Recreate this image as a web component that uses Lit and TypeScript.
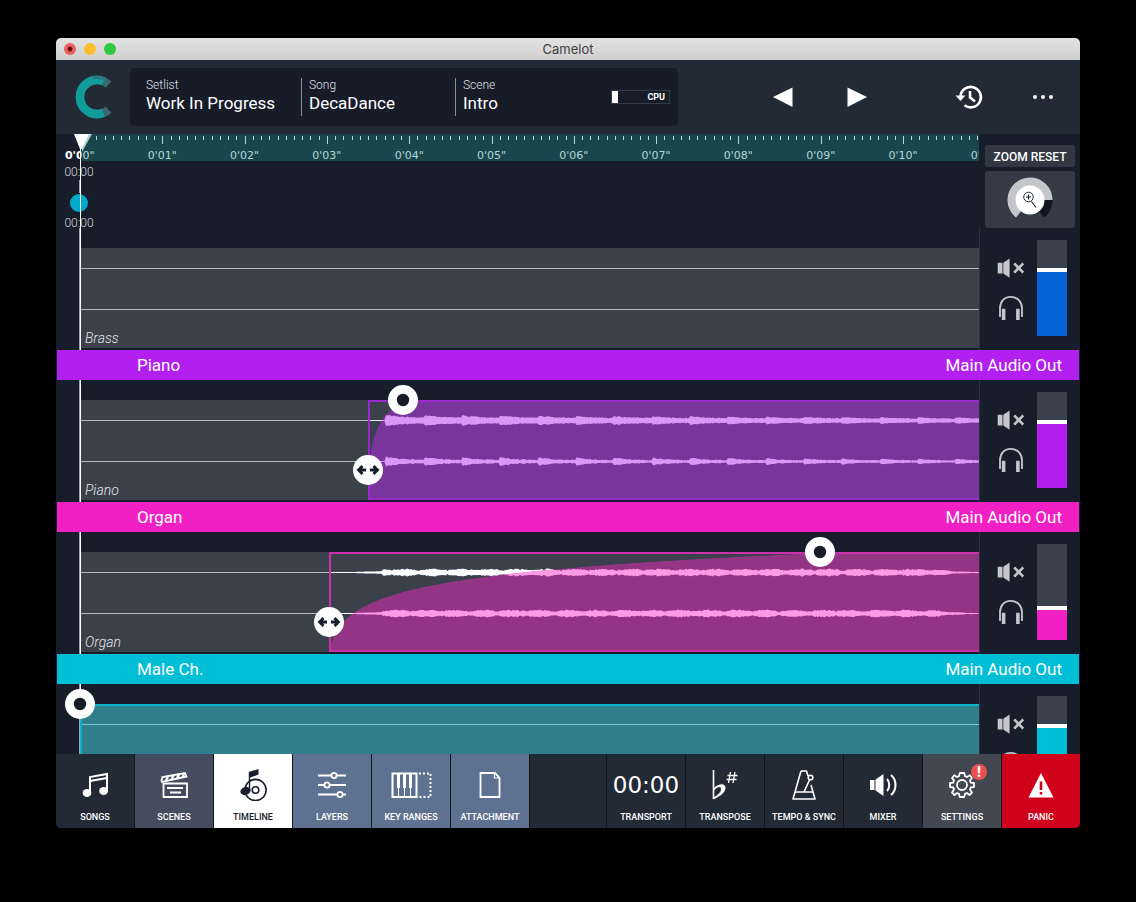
import { LitElement, html, svg, css, nothing } from "lit";
import { customElement, property, state } from "lit/decorators.js";
import { classMap } from "lit/directives/class-map.js";
import { styleMap } from "lit/directives/style-map.js";

const ORIGIN = 24; // left edge of time zero inside a lane
const SECOND = 82.3; // horizontal scale of the timeline
const CLIP_TOP = 20;
const CLIP_HEIGHT = 100;

interface Clip {
  start: number;
  fade: number;
  fill: string;
  edge: string;
  wave: string;
  shape: "piano" | "organ" | "flat";
}

interface Track {
  name: string;
  out?: string;
  color: string;
  level: number;
  clip?: Clip;
}

const TRACKS: Track[] = [
  { name: "Brass", color: "#0463d5", level: 64 },
  {
    name: "Piano",
    out: "Main Audio Out",
    color: "#b31fee",
    level: 64,
    clip: { start: 288, fade: 35, fill: "#79359c", edge: "#9a28cc", wave: "#da97f8", shape: "piano" },
  },
  {
    name: "Organ",
    out: "Main Audio Out",
    color: "#f020c4",
    level: 30,
    clip: { start: 249, fade: 491, fill: "#943485", edge: "#cc30ab", wave: "#fb9be6", shape: "organ" },
  },
  {
    name: "Male Ch.",
    out: "Main Audio Out",
    color: "#00bed6",
    level: 64,
    clip: { start: 0, fade: 0, fill: "#317e8c", edge: "#08b4c9", wave: "#7cc3cd", shape: "flat" },
  },
];

const noise = (i: number, seed: number) => {
  const v = Math.sin(i * 12.9898 + seed * 78.233) * 43758.5453;
  return v - Math.floor(v);
};

// Half height of the waveform at a distance x from time zero.
function amplitude(shape: Clip["shape"], channel: number, x: number): number {
  if (shape === "flat") return 0.5;
  const n = noise(x, channel + 1);
  if (shape === "piano") {
    if (x < 306) return 0.5;
    const phase = ((x - 306) % 38) / 38;
    const decay = Math.max(0.55, 1 - (x - 306) / 1400);
    const burst = Math.exp(-phase * 2.6);
    const base = channel === 0 ? 2.4 : 0.9;
    const peak = channel === 0 ? 2.4 : 3.2;
    return (base + burst * peak + n * 1.1) * decay;
  }
  if (x < 270) return 0.5;
  if (x < 303) return 0.5 + ((x - 270) / 33) * 0.8;
  const tail = x < 850 ? 1 : Math.max(0.2, 1 - (x - 850) / 45);
  return (1.4 + Math.abs(Math.sin((x + channel * 7) / 9)) * 1.3 + n * 1.3) * tail;
}

function wavePath(shape: Clip["shape"], channel: number, from: number, mid: number): string {
  const top: string[] = [];
  const bottom: string[] = [];
  for (let x = from; x <= 2400; x += 1.5) {
    const a = amplitude(shape, channel, x);
    top.push(`${x},${(mid - a).toFixed(1)}`);
    bottom.unshift(`${x},${(mid + a).toFixed(1)}`);
  }
  return `M${top.join("L")}L${bottom.join("L")}Z`;
}

// Logarithmic fade-in area, closed along the bottom of the clip.
function fadePath(start: number, fade: number): string {
  const pts: string[] = [];
  const steps = 80;
  for (let i = 0; i <= steps; i++) {
    const t = (i / steps) ** 2;
    const h = fade ? Math.log(1 + 100 * t) / Math.log(101) : 1;
    pts.push(`${start + t * fade},${(CLIP_HEIGHT - 1 - h * (CLIP_HEIGHT - 2)).toFixed(2)}`);
  }
  return `M${start},${CLIP_HEIGHT - 1}L${pts.join("L")}L4000,1L4000,${CLIP_HEIGHT - 1}Z`;
}

@customElement("track-lane")
export class TrackLane extends LitElement {
  @property({ attribute: false }) track!: Track;

  static styles = css`
    :host {
      display: block;
      position: relative;
      overflow: hidden;
      height: 122px;
    }
    svg {
      display: block;
      width: 100%;
      height: 100%;
    }
    .handle svg {
      width: 30px;
      height: 30px;
    }
    .name {
      position: absolute;
      left: 29px;
      bottom: 3px;
      font: italic 300 14px/18px Roboto, sans-serif;
      color: #e4e6ea;
    }
    .handle {
      position: absolute;
      width: 30px;
      height: 30px;
      margin: -15px 0 0 -15px;
      padding: 0;
      border: 0;
      border-radius: 50%;
      background: #fff;
    }
  `;

  render() {
    const { name, clip } = this.track;
    const id = `fade-${name.toLowerCase().replace(/\W/g, "")}`;
    return html`
      <svg aria-hidden="true">
        <rect x="23" y="0" width="1" height="122" fill="#9fa3ab"></rect>
        <rect x="24" y="0" width="1" height="122" fill="#fff"></rect>
        <g transform="translate(${ORIGIN} ${CLIP_TOP})">
          <rect x="1" width="4000" height=${CLIP_HEIGHT} fill="#3a414b"></rect>
          <rect x="1" y="20" width="4000" height="1" fill="#b4b8be"></rect>
          <rect x="1" y="61" width="4000" height="1" fill="#b4b8be"></rect>
          ${clip ? this.clipShape(clip, id) : nothing}
        </g>
      </svg>
      ${clip && clip.shape === "flat" ? nothing : html`<span class="name">${name}</span>`}
      ${clip ? this.handles(clip) : nothing}
    `;
  }

  private clipShape(clip: Clip, id: string) {
    const fade = fadePath(clip.start, clip.fade);
    const waves = wavePath(clip.shape, 0, clip.start, 20.5) + wavePath(clip.shape, 1, clip.start, 61.5);
    return svg`
      <clipPath id=${id}><path d=${fade}></path></clipPath>
      <path d=${waves} fill="#fff" opacity=${clip.shape === "organ" ? 1 : 0.7}></path>
      <g clip-path="url(#${id})">
        <path d=${fade} fill=${clip.fill}></path>
        <path d=${waves} fill=${clip.wave}></path>
      </g>
      <rect x=${clip.start + 1} y="1" width="4000" height=${CLIP_HEIGHT - 2}
        fill="none" stroke=${clip.edge} stroke-width="2"></rect>
    `;
  }

  private handles(clip: Clip) {
    const x = ORIGIN + clip.start;
    return html`
      <button class="handle" aria-label="Fade in"
        style=${styleMap({ left: `${x + clip.fade}px`, top: `${CLIP_TOP}px` })}>
        <svg viewBox="0 0 30 30"><circle cx="15" cy="15" r="6.2" fill="#171c29"></circle></svg>
      </button>
      ${clip.start
        ? html`<button class="handle" aria-label="Clip start"
            style=${styleMap({ left: `${x}px`, top: `${CLIP_TOP + 70}px` })}>
            <svg viewBox="0 0 30 30" fill="none" stroke="#171c29" stroke-width="2.8">
              <path d="M13 15H5.5M9.500 11L5.500 15L9.500 19M17 15H24.500M20.500 11L24.500 15L20.500 19"></path>
            </svg>
          </button>`
        : nothing}
    `;
  }
}

@customElement("time-ruler")
export class TimeRuler extends LitElement {
  @state() private span = 0;

  private observer = new ResizeObserver(([entry]) => {
    this.span = entry.contentRect.width;
  });

  connectedCallback() {
    super.connectedCallback();
    this.observer.observe(this);
  }

  disconnectedCallback() {
    super.disconnectedCallback();
    this.observer.disconnect();
  }

  static styles = css`
    :host {
      display: block;
      min-width: 0;
      overflow: hidden;
    }
    svg {
      display: block;
      width: 100%;
      height: 94px;
    }
    .tick {
      font: 11px "DejaVu Sans", sans-serif;
      fill: #b4d8d9;
      text-anchor: middle;
    }
    .first {
      fill: #fff;
      font-weight: 700;
    }
    .clock {
      font: 300 12px Roboto, sans-serif;
      fill: #d6d9df;
      text-anchor: middle;
    }
  `;

  render() {
    const length = Math.max(0, (this.span - ORIGIN) / SECOND);
    const ticks = Array.from({ length: Math.ceil(length * 10) }, (_, i) => i).slice(2);
    const seconds = Array.from({ length: Math.floor(length + 0.15) + 1 }, (_, i) => i);
    const label = (s: number) => `0'${String(s).padStart(2, "0")}"`;
    return html`
      <svg>
        <path d="M24 0H4000V27H26L24 14Z" fill="#19464c"></path>
        ${ticks.map(
          (i) => svg`<rect x=${Math.round(ORIGIN + (i * SECOND) / 10)} y="2" width="1"
            height=${i % 10 ? 4 : 8} fill="#b4d8d9"></rect>`,
        )}
        ${seconds.map((s) => svg`<text class="tick" x=${ORIGIN + s * SECOND} y="25">${label(s)}</text>`)}
        <clipPath id="before"><rect width="24" height="30"></rect></clipPath>
        <rect width="24" height="27" fill="#171d2a"></rect>
        <text class="tick first" x="25" y="25" clip-path="url(#before)">0'00"</text>
        <path d="M30 0H36L26 18V13Z" fill="#a9d0d1"></path>
        <text class="clock" x="23" y="42">00:00</text>
        <rect x="23" y="46" width="1" height="13" fill="#9fa3ab"></rect>
        <circle cx="23" cy="69" r="9" fill="#00aac8"></circle>
        <text class="clock" x="23" y="93">00:00</text>
        <path d="M18 0H33L26 15H24Z" fill="#fff"></path>
        <rect x="24" y="10" width="1" height="84" fill="#fff"></rect>
      </svg>
    `;
  }
}

@customElement("channel-strip")
export class ChannelStrip extends LitElement {
  @property({ attribute: false }) track!: Track;

  static styles = css`
    :host {
      display: flex;
      justify-content: space-between;
      box-sizing: border-box;
      padding: 12px 13px 0 15px;
      border-left: 1px solid #2b313d;
    }
    .toggles {
      display: flex;
      flex-direction: column;
      gap: 12px;
      padding-top: 14px;
    }
    button {
      display: block;
      padding: 0;
      border: 0;
      background: none;
    }
    svg {
      display: block;
    }
    .fader {
      appearance: none;
      -webkit-appearance: none;
      writing-mode: vertical-lr;
      direction: rtl;
      width: 30px;
      height: 96px;
      margin: 0;
      background: linear-gradient(to top, var(--tone) calc(var(--level) * 1px + 2px), #3a404c 0);
    }
    .fader::-webkit-slider-thumb {
      -webkit-appearance: none;
      width: 30px;
      height: 4px;
      background: #fff;
      border: 0;
      border-radius: 0;
    }
  `;

  render() {
    const { name, level, color } = this.track;
    return html`
      <div class="toggles">
        <button aria-label="Mute ${name}">
          <svg width="32" height="28" viewBox="0 0 32 28">
            <path d="M2.700 8.700h4.800v10.800H2.700zM8.300 8.700L14.600 4.400v19.400L8.300 19.500z" fill="#c5c7cc"></path>
            <path d="M19.200 9.300L28.200 18.700M28.200 9.300L19.200 18.700" stroke="#c5c7cc" stroke-width="2.600"></path>
          </svg>
        </button>
        <button aria-label="Solo ${name}">
          <svg width="32" height="28" viewBox="0 0 32 28" fill="none" stroke="#c5c7cc">
            <path d="M5 23V14.500C5 8 9 2.800 15.700 2.800S27 8 27 14.500V23" stroke-width="1.800"></path>
            <path d="M8.600 14.800V26M22.900 14.800V26" stroke-width="3.600"></path>
          </svg>
        </button>
      </div>
      <input class="fader" type="range" min="0" max="92" .value=${String(level)}
        aria-label="${name} level" style=${styleMap({ "--level": String(level), "--tone": color })} />
    `;
  }
}

const ICONS: Record<string, unknown> = {
  songs: svg`
    <path d="M-5 8V-8L12 -11V6M-5 -4L12 -7" fill="none" stroke="currentColor" stroke-width="2"></path>
    <ellipse cx="-8" cy="8" rx="4.400" ry="4"></ellipse><ellipse cx="8.600" cy="6" rx="4.400" ry="4"></ellipse>`,
  scenes: svg`
    <path d="M-10.500 -1.500H13V12H-10.500ZM-7 3H9M-4 7.500H7" fill="none" stroke="currentColor" stroke-width="1.800"></path>
    <path d="M-12.500 -4.500L-11.500 -8L11 -12L12.500 -8.500L-12 -3Z" fill="none" stroke="currentColor" stroke-width="1.800"></path>
    <path d="M-8 -4L-6 -9M-2.500 -5L-.500 -10M3 -6L5 -11M8.500 -7L10 -12" stroke="currentColor" stroke-width="2.400"></path>`,
  timeline: svg`
    <circle cx="2.500" cy="5" r="10.600" fill="none" stroke="currentColor" stroke-width="1.600"></circle>
    <circle cx="2.500" cy="5" r="3.300" fill="none" stroke="currentColor" stroke-width="1.600"></circle>
    <ellipse cx="-7.500" cy="6" rx="5.200" ry="4" transform="rotate(-18 -7.500 6)"></ellipse>
    <path d="M-4.200 6V-13L5.500 -16V-10.500L-2.800 -7.500V6Z"></path>`,
  layers: svg`
    <path d="M-14 -9.500H-1M5 -9.500H14M-14 0H-8M-2 0H14M-14 9.500H5M11 9.500H14" stroke="currentColor" stroke-width="2"></path>
    <g fill="none" stroke="currentColor" stroke-width="1.800"><circle cx="2" cy="-9.500" r="2.600"></circle>
    <circle cx="-5" cy="0" r="2.600"></circle><circle cx="8" cy="9.500" r="2.600"></circle></g>`,
  keys: svg`
    <path d="M-18.500 -11.500H5.500V12H-18.500Z" fill="none" stroke="currentColor" stroke-width="2"></path>
    <path d="M-12.500 -11V3M-6.500 -11V3M-.500 -11V3" stroke="currentColor" stroke-width="3"></path>
    <path d="M-12.500 3V12M-6.500 3V12M-.500 3V12" stroke="currentColor" stroke-width="1"></path>
    <path d="M8 -11.500H19.500V12H6" fill="none" stroke="currentColor" stroke-width="2" stroke-dasharray="2 2"></path>`,
  file: svg`
    <path d="M-9.500 -12H5L9.500 -7V12H-9.500Z" fill="none" stroke="currentColor" stroke-width="1.800"></path>
    <path d="M4.500 -12V-7H9.500" fill="none" stroke="currentColor" stroke-width="1.200"></path>`,
  accidentals: svg`
    <path d="M-11.500 -15V14" stroke="currentColor" stroke-width="1.600"></path>
    <path d="M-12 14.500C-4 11 .500 7 .500 3C.500 -2 -6 -2 -11 3V5.500C-7.500 1.200 -4 .800 -4 4.200C-4 7.500 -8 10.500 -11 12Z"></path>
    <path d="M5.500 -13L3.500 -2M10 -13L8 -2M2.500 -9.500H12.500M1.500 -5.500H11.500" stroke="currentColor" stroke-width="1.300"></path>`,
  metronome: svg`
    <g fill="none" stroke="currentColor" stroke-width="1.600" stroke-linejoin="round">
    <path d="M-3 -14H2.500L4 -9M7 0L11 14H-11L-3 -14M-9 7H9M0 7L5.500 -5"></path>
    <circle cx="6.500" cy="-7.500" r="2.300"></circle></g>`,
  mixer: svg`
    <path d="M-13 -5H-8.500V5H-13ZM-7.500 -5.500L.500 -11V11L-7.500 5.500Z"></path>
    <path d="M4 -6C7 -3 7 3 4 6M8 -10C14 -5 14 5 8 10" fill="none" stroke="currentColor" stroke-width="2"></path>`,
  gear: svg`
    <g fill="none" stroke="currentColor" stroke-width="1.800" stroke-linejoin="round">
    <path d="M-2.200 -12H2.200L3 -8.800L5 -8L7.800 -9.700L10 -7L8 -4.600L8.800 -2.400L12 -2V2L8.800 2.400L8 4.600L10 7.500L7.500 10L5 8L3 8.800L2.200 12H-2.200L-3 8.800L-5 8L-7.500 10L-10 7.500L-8 4.600L-8.800 2.400L-12 2V-2L-8.800 -2.400L-8 -4.600L-10 -7L-7.800 -9.700L-5 -8L-3 -8.800Z"></path>
    <circle r="5"></circle></g>`,
  warning: svg`
    <path d="M0 -12L12.500 12.500H-12.500Z"></path>
    <path d="M0 -3.500V5M0 7V9.500" stroke="#d0021b" stroke-width="2.600"></path>`,
};

interface Tab {
  label: string;
  icon?: string;
  tone: string;
  badge?: boolean;
}

const TABS: (Tab | null)[] = [
  { label: "SONGS", icon: "songs", tone: "base" },
  { label: "SCENES", icon: "scenes", tone: "slate" },
  { label: "TIMELINE", icon: "timeline", tone: "active" },
  { label: "LAYERS", icon: "layers", tone: "blue" },
  { label: "KEY RANGES", icon: "keys", tone: "blue" },
  { label: "ATTACHMENT", icon: "file", tone: "blue" },
  null,
  { label: "TRANSPORT", tone: "base" },
  { label: "TRANSPOSE", icon: "accidentals", tone: "base" },
  { label: "TEMPO & SYNC", icon: "metronome", tone: "base" },
  { label: "MIXER", icon: "mixer", tone: "base" },
  { label: "SETTINGS", icon: "gear", tone: "grey", badge: true },
  { label: "PANIC", icon: "warning", tone: "red" },
];

@customElement("app-root")
export class AppRoot extends LitElement {
  static styles = css`
    :host {
      display: flex;
      box-sizing: border-box;
      height: 100vh;
      padding: 38px 56px 74px;
      background: #000;
      color: #fff;
      font-family: Roboto, sans-serif;
    }
    button {
      padding: 0;
      border: 0;
      background: none;
      color: inherit;
      font: inherit;
    }
    svg {
      display: block;
    }
    .window {
      display: flex;
      flex: 1;
      flex-direction: column;
      min-width: 0;
      overflow: hidden;
      border-radius: 5px;
      background: #171d2a;
    }
    .titlebar {
      display: grid;
      grid-template-columns: 1fr auto 1fr;
      align-items: center;
      flex: none;
      height: 22px;
      padding: 0 8px;
      background: linear-gradient(#e2e2e2, #cfcfcf);
      color: #3f3f42;
      font-family: Inter, sans-serif;
      font-size: 13px;
    }
    .lights {
      display: flex;
      gap: 8px;
    }
    .light {
      display: grid;
      place-items: center;
      width: 12px;
      height: 12px;
      border-radius: 50%;
    }
    .close {
      background: radial-gradient(circle, #6a0c0c 2px, #ed6161 3px);
    }
    .minimise {
      background: #fdbd2f;
    }
    .maximise {
      background: #2bc840;
    }
    .header {
      display: flex;
      align-items: center;
      flex: none;
      height: 74px;
      background: #222a36;
    }
    .logo {
      flex: none;
      width: 74px;
    }
    .info {
      display: flex;
      align-items: center;
      flex: 0 1 548px;
      box-sizing: border-box;
      height: 58px;
      padding: 0 8px;
      border-radius: 4px;
      background: #171c29;
    }
    .field {
      box-sizing: border-box;
      width: 154px;
      height: 38px;
      padding: 0 0 2px 7px;
      border-left: 1px solid #8b8f98;
      text-align: left;
    }
    .field:first-child {
      width: 163px;
      padding-left: 8px;
      border-left: 0;
    }
    .caption {
      display: block;
      font-size: 12px;
      font-weight: 300;
      line-height: 14px;
      color: #dfe1e6;
    }
    .value {
      display: block;
      font-size: 17px;
      line-height: 22px;
      white-space: nowrap;
    }
    .cpu {
      display: flex;
      justify-content: space-between;
      box-sizing: border-box;
      width: 59px;
      height: 14px;
      margin-left: auto;
      padding-right: 4px;
      border: 1px solid #343a46;
      font-size: 9px;
      font-weight: 700;
      line-height: 12px;
    }
    .load {
      width: 6px;
      background: #fff;
    }
    .group {
      display: flex;
      gap: 40px;
      padding-left: 88px;
    }
    .group.end {
      margin-left: auto;
      padding: 0 20px 0 0;
    }
    .stage {
      flex: 1;
      min-height: 0;
      overflow: hidden;
    }
    .row {
      display: grid;
      grid-template-columns: minmax(0, 1fr) 101px;
    }
    .zoom {
      display: flex;
      flex-direction: column;
      gap: 4px;
      padding: 11px 5px 0 6px;
    }
    .reset {
      height: 22px;
      border-radius: 3px;
      background: #313743;
      font-size: 12px;
      font-weight: 500;
      line-height: 24px;
    }
    .dial {
      display: grid;
      place-items: center;
      height: 57px;
      border-radius: 3px;
      background: #353a46;
    }
    .dial > * {
      grid-area: 1 / 1;
    }
    .dial input {
      width: 46px;
      height: 46px;
      margin: 0;
      opacity: 0;
    }
    .bar {
      display: flex;
      justify-content: space-between;
      margin: 0 1px;
      padding: 0 17px 0 80px;
      font-size: 17px;
      line-height: 30px;
    }
    .tabs {
      display: grid;
      grid-template-columns: repeat(6, minmax(0, 78fr)) minmax(0, 76fr) repeat(6, minmax(0, 78fr));
      gap: 1px;
      flex: none;
      height: 74px;
      background: #10151e;
    }
    .tab {
      position: relative;
      display: flex;
      flex-direction: column;
      align-items: center;
      padding-top: 15px;
      background: #222a36;
      overflow: hidden;
    }
    .tab.slate {
      background: #454c5f;
    }
    .tab.active {
      background: #fff;
      color: #171c29;
    }
    .tab.blue {
      background: #5f7190;
    }
    .tab.grey {
      background: #434751;
    }
    .tab.red {
      background: #d0021b;
    }
    .tab > svg {
      fill: currentColor;
    }
    .glyph {
      height: 32px;
      font: 23px/32px "DejaVu Sans", sans-serif;
    }
    .label {
      padding-top: 9px;
      font-size: 9px;
      font-weight: 500;
      line-height: 14px;
      white-space: nowrap;
    }
    .badge {
      position: absolute;
      top: 10px;
      right: 14px;
      width: 16px;
      height: 16px;
      border-radius: 50%;
      background: #e9504f;
      font-size: 14px;
      font-weight: 900;
      line-height: 16px;
      text-align: center;
    }
  `;

  private field(caption: string, value: string) {
    return html`<button class="field">
      <span class="caption">${caption}</span><span class="value">${value}</span>
    </button>`;
  }

  private tab(tab: Tab | null) {
    if (!tab) return html`<div class="tab"></div>`;
    return html`
      <button class=${classMap({ tab: true, [tab.tone]: true })}>
        ${tab.icon
          ? html`<svg width="44" height="32" viewBox="-22 -16 44 32">${ICONS[tab.icon]}</svg>`
          : html`<span class="glyph">00:00</span>`}
        <span class="label">${tab.label}</span>
        ${tab.badge ? html`<span class="badge">!</span>` : nothing}
      </button>
    `;
  }

  render() {
    return html`
      <main class="window">
        <div class="titlebar">
          <div class="lights">
            <button class="light close" aria-label="Close"></button>
            <button class="light minimise" aria-label="Minimise"></button>
            <button class="light maximise" aria-label="Maximise"></button>
          </div>
          <span>Camelot</span>
        </div>

        <header class="header">
          <svg class="logo" width="74" height="44" viewBox="-1 0 74 44" fill="none" stroke-width="8.500">
            <path d="M51.500 9.500A17 17 0 1 0 51.500 34.500" stroke="#3c676e"></path>
            <path d="M46.500 6.300A17 17 0 1 0 46.500 37.700" stroke="#109c9b"></path>
            <path d="M36 3A19.500 19.500 0 0 1 48 4.200" stroke="#2a7b80" stroke-width="3"></path>
          </svg>
          <section class="info">
            ${this.field("Setlist", "Work In Progress")} ${this.field("Song", "DecaDance")}
            ${this.field("Scene", "Intro")}
            <div class="cpu" role="meter" aria-label="CPU" aria-valuenow="10"><span class="load"></span>CPU</div>
          </section>
          <nav class="group">
            <button aria-label="Previous">
              <svg width="34" height="34"><path d="M7 17L26.500 7.500V27Z" fill="#fff"></path></svg>
            </button>
            <button aria-label="Next">
              <svg width="34" height="34"><path d="M27 17L7.500 7.500V27Z" fill="#fff"></path></svg>
            </button>
          </nav>
          <div class="group end">
            <button aria-label="History">
              <svg width="34" height="34" fill="none" stroke="#fff" stroke-width="2.600">
                <path d="M8.500 17A10.200 10.200 0 1 1 12.500 25.200"></path>
                <path d="M3.500 15.500H13.500L8.500 21Z" fill="#fff" stroke="none"></path>
                <path d="M18 11V17.500L23 21.500"></path>
              </svg>
            </button>
            <button aria-label="More">
              <svg width="34" height="34" fill="#fff">
                <circle cx="9" cy="17" r="2"></circle><circle cx="17" cy="17" r="2"></circle>
                <circle cx="25" cy="17" r="2"></circle>
              </svg>
            </button>
          </div>
        </header>

        <section class="stage">
          <div class="row">
            <time-ruler></time-ruler>
            <div class="zoom">
              <button class="reset">ZOOM RESET</button>
              <label class="dial">
                <svg width="46" height="46" viewBox="-23 -23 46 46">
                  <path d="M22.500 0A22.500 22.500 0 0 1 14 17.600L0 0Z" fill="#10151f"></path>
                  <path d="M-14 17.600A22.500 22.500 0 1 1 22.500 0L0 0Z" fill="#c4c6ca"></path>
                  <circle r="14.500" fill="#fff"></circle>
                  <g fill="none" stroke="#222a36" stroke-width="1">
                    <circle cx="-1.500" cy="-3" r="4.800"></circle>
                    <path d="M-4 -3H1M-1.500 -5.500V-.500M1.500 1.500L6 7.500" stroke-width="1.200"></path>
                  </g>
                </svg>
                <input type="range" min="0" max="100" value="80" aria-label="Zoom" />
              </label>
            </div>
          </div>
          ${TRACKS.map(
            (track) => html`
              ${track.out
                ? html`<div class="bar" style=${styleMap({ background: track.color })}>
                    <span>${track.name}</span><span>${track.out}</span>
                  </div>`
                : nothing}
              <div class="row">
                <track-lane .track=${track}></track-lane>
                <channel-strip .track=${track}></channel-strip>
              </div>
            `,
          )}
        </section>

        <nav class="tabs">${TABS.map((t) => this.tab(t))}</nav>
      </main>
    `;
  }
}
